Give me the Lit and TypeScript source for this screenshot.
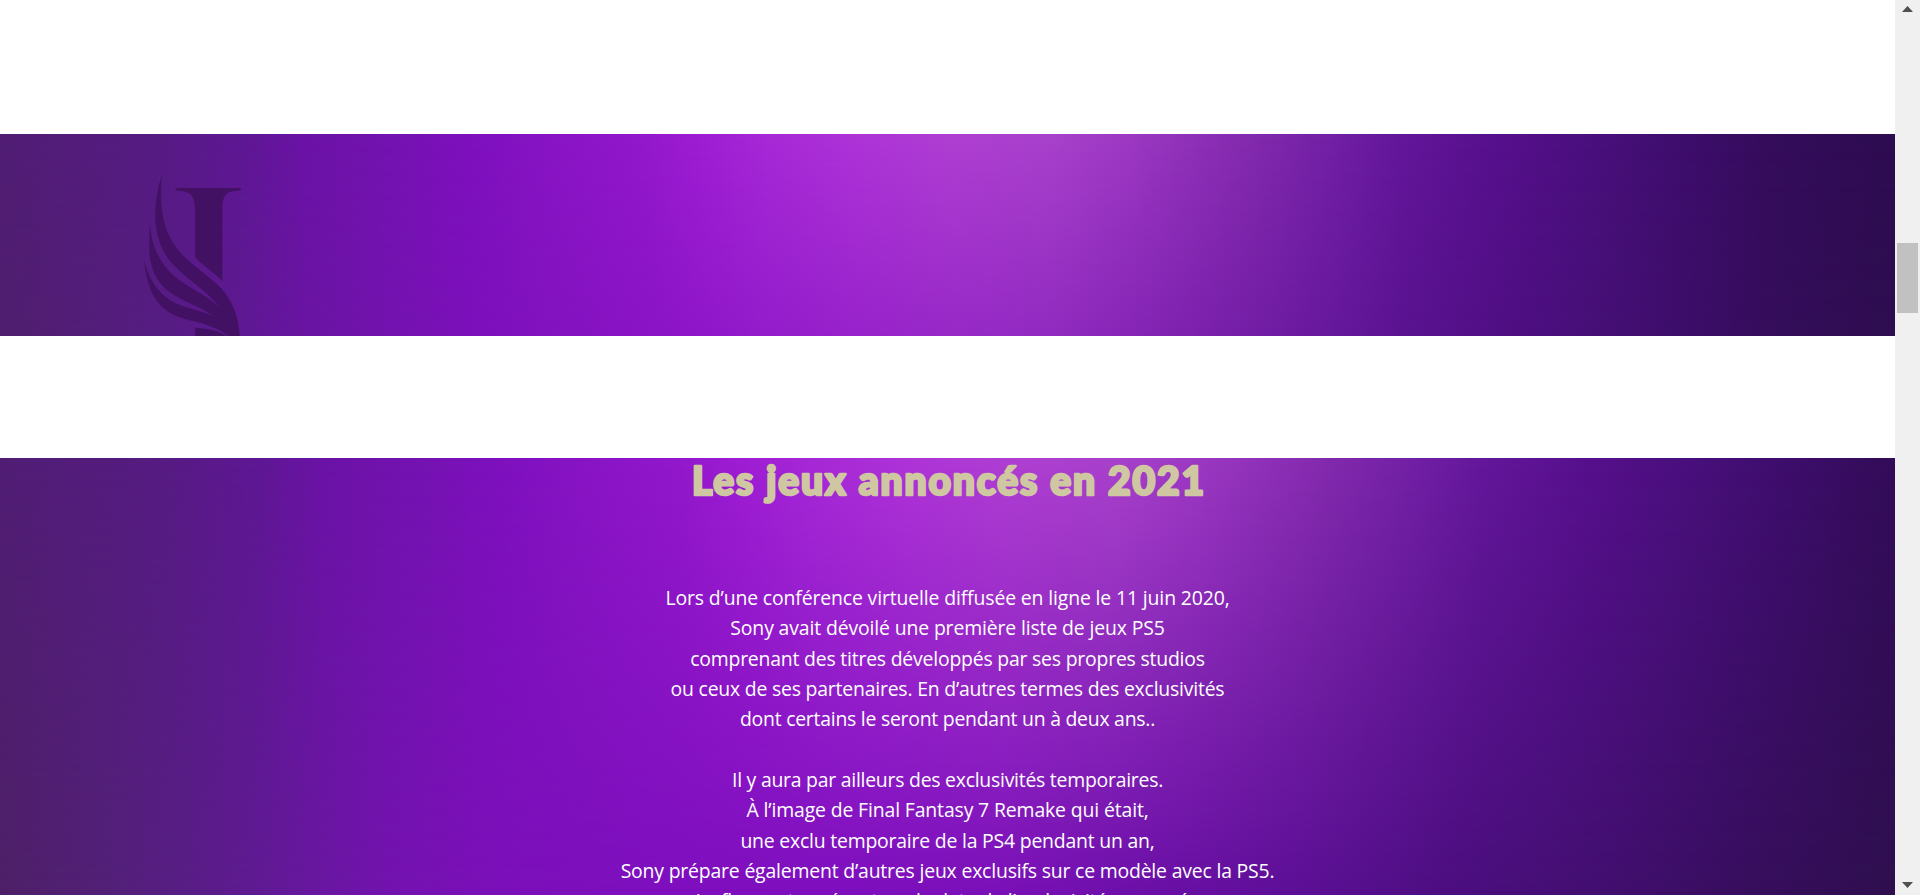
import { LitElement, html, css } from "lit";
import { customElement } from "lit/decorators.js";

interface Line {
  text: string;
  spacing: number;
}

const LINES: Line[] = [
  { text: "Lors d’une conférence virtuelle diffusée en ligne le 11 juin 2020,", spacing: -0.13 },
  { text: "Sony avait dévoilé une première liste de jeux PS5", spacing: -0.13 },
  { text: "comprenant des titres développés par ses propres studios", spacing: -0.2 },
  { text: "ou ceux de ses partenaires. En d’autres termes des exclusivités", spacing: -0.2 },
  { text: "dont certains le seront pendant un à deux ans..", spacing: -0.24 },
  { text: "", spacing: 0 },
  { text: "Il y aura par ailleurs des exclusivités temporaires.", spacing: -0.24 },
  { text: "À l’image de Final Fantasy 7 Remake qui était,", spacing: -0.13 },
  { text: "une exclu temporaire de la PS4 pendant un an,", spacing: -0.2 },
  { text: "Sony prépare également d’autres jeux exclusifs sur ce modèle avec la PS5.", spacing: -0.18 },
  { text: "Le flou reste présent sur la date de l’exclusivité annoncée", spacing: -0.2 },
];

@customElement("app-root")
export class AppRoot extends LitElement {
  static styles = css`
    :host {
      display: flex;
      width: 100%;
      height: 895px;
      overflow: hidden;
      background: #fff;
    }
    .page {
      flex: 1;
      display: flex;
      flex-direction: column;
      padding-top: 134px;
      gap: 122px;
    }
    .band {
      position: relative;
      isolation: isolate;
      overflow: hidden;
      background: linear-gradient(90deg, #4e2068 0, #53207a 120px, #5e1b90 245px, #6b16a4 337px, #7412b0 398px, #7b10b9 490px, #7e0fbe 640px, #7e0fbe 850px, #7a10b8 1000px, #6a0fa6 1160px, #5c0f96 1300px, #4c0e80 1450px, #420f70 1600px, #370e5e 1750px, #2f0f4f 1895px) 0 0 / 1895px 100%;
    }
    .band::before {
      content: "";
      position: absolute;
      z-index: -1;
      inset: 0 auto auto 0;
      width: 1895px;
      height: 437px;
      background: linear-gradient(90deg, #501d74 0, #561b82 153px, #5e1794 245px, #6b12a6 306px, #7412b1 398px, #7e10be 474px, #8814c4 551px, #9318cb 643px, #9e1dd3 700px, #a628d6 765px, #ae33d7 857px, #af3ed2 950px, #a841cb 1050px, #9c38c2 1130px, #832aae 1250px, #7220a5 1330px, #63169a 1400px, #560f8c 1500px, #480f7b 1600px, #3d0d6b 1690px, #340c5b 1770px, #2d0c50 1895px);
      -webkit-mask-image: linear-gradient(#000, rgba(0, 0, 0, 0.5) 50%, transparent);
      mask-image: linear-gradient(#000, rgba(0, 0, 0, 0.5) 50%, transparent);
    }
    .brand {
      height: 176px;
      padding: 26px 0 0 120px;
    }
    .logo {
      display: block;
      width: 150px;
      height: 176px;
      fill: #431163;
    }
    .games {
      flex: 1;
      min-height: 0;
      text-align: center;
    }
    .games::before {
      transform: scaleX(1.06);
      transform-origin: 0 0;
    }
    .title {
      margin: 0;
      height: 125px;
      display: flex;
      justify-content: center;
    }
    .title svg {
      width: 530px;
      height: 60px;
      font: 900 39px Lato, sans-serif;
      fill: #cfc7a2;
      stroke: #cfc7a2;
      stroke-width: 2.6;
      stroke-linejoin: round;
    }
    .line {
      height: 30.35px;
      font: 19.4px/30.35px "Open Sans", "Noto Sans", sans-serif;
      color: #fff;
      white-space: nowrap;
    }
    .scrollbar {
      width: 25px;
      box-sizing: border-box;
      background: #f0f0f0;
      display: flex;
      flex-direction: column;
      align-items: center;
      justify-content: space-between;
      padding: 6px 0 7px;
    }
    .arrow {
      display: block;
      width: 11px;
      height: 6px;
      fill: #505050;
    }
    .track {
      flex: 1;
      align-self: stretch;
      padding: 231px 2px 0;
    }
    .thumb {
      height: 70px;
      background: #c1c1c1;
    }
  `;

  render() {
    return html`
      <main class="page">
        <section class="band brand">
          <svg class="logo" viewBox="0 0 450 528">
            <path d="M169 84H360Q363 84 363 88Q363 92 357 92C322 93 307 100 307 150V364C283 338 250 318 225 292V150C225 102 208 93 173 92Q166 92 166 88Q166 84 169 84Z" />
            <path d="M125 46C120 125 124 185 154 240C188 298 238 325 288 370C330 406 357 464 359 528H325C265 482 205 488 155 461C100 432 78 372 73 300C85 355 112 396 150 420C190 446 238 448 278 468C238 436 180 425 138 388C96 350 85 300 88 242Q88 210 90 188C93 252 116 304 158 344C200 382 256 400 300 443C255 385 195 356 149 302C101 240 92 150 125 46Z" />
            <path d="M225 503C260 504 298 513 320 528H225Z" />
          </svg>
        </section>
        <section class="band games">
          <h2 class="title">
            <svg viewBox="0 0 530 60">
              <text x="9" y="37" textLength="512" lengthAdjust="spacing">Les jeux annoncés en 2021</text>
            </svg>
          </h2>
          ${LINES.map(
            (l) => html`<div class="line" style="letter-spacing:${l.spacing}px">${l.text}</div>`
          )}
        </section>
      </main>
      <aside class="scrollbar">
        <svg class="arrow" viewBox="0 0 11 6"><path d="M5.5 0L11 6H0Z" /></svg>
        <div class="track"><div class="thumb"></div></div>
        <svg class="arrow" viewBox="0 0 11 6"><path d="M0 0H11L5.5 6Z" /></svg>
      </aside>
    `;
  }
}
